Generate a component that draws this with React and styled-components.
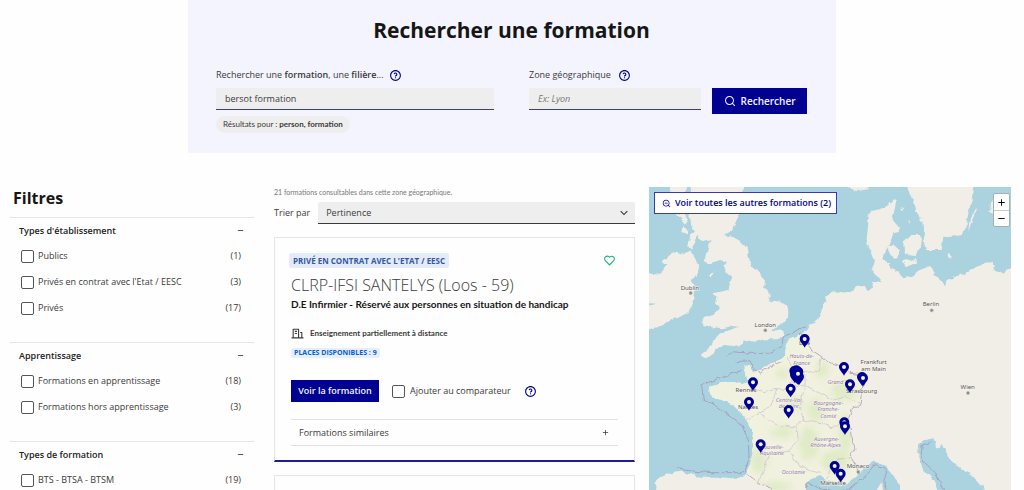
import React from 'react';
import styled, { createGlobalStyle } from 'styled-components';
import {
  RiQuestionLine,
  RiSearchLine,
  RiZoomOutLine,
  RiHeartLine,
  RiBuildingLine,
  RiArrowDownSLine,
  RiAddLine,
  RiSubtractLine
} from 'react-icons/ri';

const GlobalStyle = createGlobalStyle`
  * {
    box-sizing: border-box;
  }
  html {
    scrollbar-width: none;
  }
  body {
    margin: 0;
    background: #fefefe;
    color: #3a3a3a;
    font-family: "Open Sans", "Noto Sans", sans-serif;
    font-size: 9px;
    line-height: 14px;
  }
  button, input, select {
    font: inherit;
    color: inherit;
    margin: 0;
    border-radius: 0;
  }
  h1, h2, h3, p, ul {
    margin: 0;
    padding: 0;
  }
`;

const blue = '#000091';
const compactFont = 'Lato, "Open Sans", sans-serif';

/* ---------- search banner ---------- */

const Banner = styled.header`
  max-width: 648px;
  height: 153px;
  margin: 0 auto;
  padding: 14px 29px 0 28px;
  background: #f4f4fe;
`;

const BannerTitle = styled.h1`
  color: #161616;
  font-size: 21px;
  line-height: 32px;
  text-align: center;
`;

const SearchForm = styled.form`
  display: flex;
  align-items: flex-start;
  margin-top: 20px;
`;

const Field = styled.div`
  flex: ${props => props.$grow} 1 0;
  min-width: 0;
  margin-right: ${props => props.$gap}px;
`;

const FieldLabel = styled.div`
  display: flex;
  align-items: center;
  gap: ${props => props.$gap}px;
  height: 18px;
  margin-bottom: 4px;
  b {
    font-weight: 600;
  }
`;

const HelpButton = styled.button`
  display: flex;
  padding: 0;
  border: 0;
  background: none;
  color: ${blue};
  font-size: 13px;
`;

const TextInput = styled.input`
  display: block;
  width: 100%;
  height: 22px;
  padding: 0 9px;
  border: 0;
  border-bottom: 1px solid #3a3ab0;
  border-radius: 2px 2px 0 0;
  background: #eee;
  outline: none;
  &::placeholder {
    color: #777;
    font-style: italic;
    opacity: 1;
  }
`;

const Chip = styled.p`
  display: inline-block;
  margin-top: 6px;
  padding: 0 7px;
  border-radius: 9px;
  background: #eee;
  font-family: ${compactFont};
  font-size: 8px;
  line-height: 17px;
`;

const PrimaryButton = styled.button`
  display: flex;
  align-items: center;
  justify-content: center;
  gap: 5px;
  width: ${props => props.$width}px;
  height: ${props => props.$height}px;
  padding: 0;
  border: 0;
  background: ${blue};
  color: #f5f5fe;
  font-size: ${props => props.$size}px;
  font-weight: 600;
`;

const SearchButton = styled(PrimaryButton)`
  margin-top: 22px;
`;

/* ---------- page columns ---------- */

const Columns = styled.main`
  display: flex;
  margin-top: 34px;
  padding: 0 13px 0 10px;
`;

const Filters = styled.aside`
  flex: 0 0 244px;
  margin-right: 20px;
`;

const Results = styled.section`
  flex: 361 1 0;
  min-width: 0;
  margin-right: 14px;
`;

/* ---------- filters ---------- */

const FiltersTitle = styled.h2`
  padding-left: 3px;
  color: #161616;
  font-size: 16px;
  line-height: 22px;
  margin-bottom: 8px;
`;

const FilterGroup = styled.section`
  padding: 0 13px 21px 9px;
  border-top: 1px solid #e5e5e5;
`;

const FilterHeader = styled.h3`
  display: flex;
  align-items: center;
  justify-content: space-between;
  height: 25px;
  margin-right: -4px;
  color: #222;
  font-size: 9px;
  font-weight: 600;
`;

const Toggle = styled.button`
  display: flex;
  padding: 0;
  border: 0;
  background: none;
  font-size: 9px;
`;

const FilterRow = styled.li`
  display: flex;
  align-items: center;
  justify-content: space-between;
  height: 26px;
  padding-left: 2px;
`;

const CheckLabel = styled.label`
  display: flex;
  align-items: center;
  gap: ${props => props.$gap || 4}px;
`;

const Checkbox = styled.input.attrs({ type: 'checkbox' })`
  appearance: none;
  width: 13px;
  height: 13px;
  border: 1px solid #555;
  border-radius: 2px;
  background: #fff;
  &:checked {
    background: ${blue};
  }
`;

/* ---------- results ---------- */

const Count = styled.p`
  color: #777;
  font-family: ${compactFont};
  font-size: 7px;
  line-height: 10px;
`;

const SortRow = styled.div`
  display: flex;
  align-items: center;
  gap: 8px;
  margin: 5px 0 13px;
`;

const SelectBox = styled.div`
  position: relative;
  flex: 1;
`;

const Select = styled.select`
  display: block;
  appearance: none;
  width: 100%;
  height: 22px;
  padding: 0 8px;
  border: 0;
  border-bottom: 1px solid #3a3a3a;
  border-radius: 2px 2px 0 0;
  background: #eee;
`;

const SelectArrow = styled(RiArrowDownSLine)`
  position: absolute;
  top: 4px;
  right: 4px;
  font-size: 14px;
  pointer-events: none;
`;

const Card = styled.article`
  min-height: 225px;
  margin-bottom: 13px;
  padding: 13px 16px 0;
  border: 1px solid #e5e5e5;
  border-bottom: 2px solid #1d1d9c;
`;

const CardTop = styled.div`
  display: flex;
  align-items: center;
  justify-content: space-between;
  height: 18px;
  margin-left: -2px;
`;

const Badge = styled.span`
  display: inline-block;
  padding: 0 ${props => (props.$small ? 3 : 4)}px;
  border-radius: 2px;
  background: ${props => (props.$small ? '#e8edff' : '#e3ebfd')};
  color: ${props => (props.$small ? '#0063cb' : '#3558a2')};
  font-size: ${props => (props.$small ? 7 : 8)}px;
  font-weight: 700;
  line-height: ${props => (props.$small ? 10 : 15)}px;
  text-transform: uppercase;
`;

const LikeButton = styled(HelpButton)`
  margin-right: 2px;
  color: #1fb57a;
`;

const School = styled.p`
  margin-top: 5px;
  font-size: 16px;
  font-weight: 300;
  line-height: 22px;
`;

const Course = styled.h3`
  color: #161616;
  font-family: ${compactFont};
  font-size: 10px;
  line-height: 16px;
`;

const Mode = styled.p`
  display: flex;
  align-items: center;
  gap: 6px;
  margin-top: 14px;
  font-family: ${compactFont};
  font-size: 8px;
  font-weight: 700;
  line-height: 14px;
  svg {
    font-size: 13px;
  }
`;

const Places = styled.div`
  display: flex;
  margin-top: 8px;
`;

const Actions = styled.div`
  display: flex;
  align-items: center;
  gap: 13px;
  margin-top: 22px;
`;

const Similar = styled.button`
  display: flex;
  align-items: center;
  justify-content: space-between;
  width: 100%;
  height: 27px;
  margin-top: 17px;
  padding: 0 8px;
  border: 0;
  border-top: 1px solid #e0e0e0;
  border-bottom: 1px solid #e0e0e0;
  background: none;
`;

/* ---------- map ---------- */

const MapPanel = styled.section`
  position: relative;
  flex: 362 1 0;
  min-width: 0;
  height: calc(100vh - 187px);
  min-height: 303px;
  overflow: hidden;
  background: #aad3df;
`;

const MapDrawing = styled.svg`
  display: block;
  width: 100%;
  height: 100%;
`;

const SeeAll = styled.button`
  position: absolute;
  top: 5px;
  left: 5px;
  display: flex;
  align-items: center;
  gap: 4px;
  height: 22px;
  padding: 0 5px 0 7px;
  border: 1px solid #3a3ab0;
  background: #fff;
  color: ${blue};
  font-weight: 600;
`;

const ZoomControl = styled.div`
  position: absolute;
  top: 6px;
  right: 1px;
  border: 1px solid #9fb0b8;
  border-radius: 2px;
  background: #fff;
`;

const ZoomButton = styled.button`
  display: flex;
  align-items: center;
  justify-content: center;
  width: 15px;
  height: 16px;
  padding: 0;
  border: 0;
  background: none;
  color: #000;
  font-size: 11px;
  & + & {
    border-top: 1px solid #ccc;
  }
`;

const Town = styled.text`
  fill: #555;
  stroke: #f5f3ee;
  stroke-width: 3px;
  paint-order: stroke;
  font-family: "Noto Sans", sans-serif;
  font-size: 18px;
  text-anchor: middle;
`;

const Region = styled(Town)`
  fill: #9a83a5;
  font-size: 17px;
  font-style: italic;
`;

const filterGroups = [
  {
    title: "Types d'établissement",
    items: [['Publics', 1], ["Privés en contrat avec l'Etat / EESC", 3], ['Privés', 17]]
  },
  {
    title: 'Apprentissage',
    items: [['Formations en apprentissage', 18], ['Formations hors apprentissage', 3]]
  },
  {
    title: 'Types de formation',
    items: [['BTS - BTSA - BTSM', 19]]
  }
];

// name, x, baseline
const towns = [
  ['Dublin', 123, 308],
  ['London', 349, 419],
  ['Berlin', 846, 358],
  ['Frankfurt', 674, 530],
  ['am Main', 674, 551],
  ['Strasbourg', 638, 617],
  ['Wien', 956, 607],
  ['Monaco', 627, 844],
  ['Marseille', 552, 895],
  ['Rennes', 291, 616],
  ['Nantes', 297, 665],
  ['Lille', 467, 474]
];

const regions = [
  ['Hauts-de-', 458, 514],
  ['France', 458, 533],
  ['Grand Est', 572, 591],
  ['Centre-Val', 419, 644],
  ['de Loire', 419, 663],
  ['Bourgogne-', 538, 653],
  ['Franche-', 538, 673],
  ['Comté', 538, 692],
  ['Auvergne-', 533, 762],
  ['Rhône-Alpes', 530, 780],
  ['Nouvelle-', 368, 785],
  ['Aquitaine', 369, 804],
  ['Occitanie', 433, 862]
];

const townDots = [[125, 318], [349, 430], [848, 370], [957, 618], [628, 855]];

const pins = [
  [467, 456], [312, 586], [300, 645], [436, 552], [448, 554], [442, 550],
  [438, 563], [450, 569], [445, 567], [440, 558], [447, 560], [425, 605], [419, 669], [335, 772],
  [585, 540], [603, 592], [639, 570], [642, 573], [586, 706], [588, 718],
  [557, 837], [575, 860]
];

const coastWest = '443 449 418 459 410 484 408 509 383 524 348 539 338 551 313 554 306 539 286 534 291 559 296 584 278 591 253 589 228 584 203 594 180 599 183 619 193 634 218 639 243 649 263 664 278 679 288 699 303 719 313 729 310 754 316 774 306 819 293 859';

const Pin = ({ x, y }) => (
  <g transform={`translate(${x} ${y})`}>
    <path d="M0 26C-4 17-15 9-15 0A15 15 0 0 1 15 0C15 9 4 17 0 26Z" fill={blue} />
    <circle r="6" fill="#f5f5fa" />
  </g>
);

const EuropeMap = () => (
  <MapDrawing viewBox="0 0 1086 909" preserveAspectRatio="xMinYMin slice" role="img" aria-label="Carte des formations">
    <defs>
      <filter id="rough" x="0" y="0" width="100%" height="100%" filterUnits="userSpaceOnUse" colorInterpolationFilters="sRGB">
        <feTurbulence type="fractalNoise" baseFrequency="0.05" numOctaves="2" seed="4" />
        <feDisplacementMap in="SourceGraphic" scale="14" xChannelSelector="R" yChannelSelector="G" />
      </filter>
      <filter id="soft">
        <feGaussianBlur stdDeviation="9" />
      </filter>
      <clipPath id="france">
        <path d={`M${coastWest} 328 889 368 904 388 909 468 909 468 894 488 874 513 864 533 879 558 894 588 897 628 864 623 839 603 809 618 784 608 759 603 719 583 714 598 694 613 664 633 654 638 609 648 579 643 564 603 559 578 539 543 530 518 509 488 489 468 459 450 441Z`} />
      </clipPath>
    </defs>
    <g filter="url(#rough)">
      {/* sea goes a little past the frame so the displaced edge stays hidden */}
      <rect x="-30" y="-30" width="1146" height="969" fill="#aad3df" />
      <g fill="#f1eee8">
        <path d="M-20 259 0 259 33 264 53 234 38 222 63 204 83 194 103 201 123 190 138 214 150 241 143 269 128 279 136 309 130 354 118 379 93 389 58 404 28 419 -20 432 -20 362 18 350 -20 346Z" />
        <path d="M123 -20 298 -20 278 17 273 79 263 99 250 129 228 144 253 151 278 164 293 184 303 224 310 241 333 259 348 279 346 299 363 324 360 344 373 341 398 344 416 359 418 379 406 404 388 419 368 429 403 431 406 447 388 457 348 457 318 464 288 459 273 474 253 477 228 474 203 484 193 504 173 514 153 504 148 509 173 489 193 464 210 439 243 429 268 419 248 417 223 424 193 421 163 414 160 394 193 384 213 364 198 349 203 329 188 319 218 314 238 309 243 289 250 274 233 254 223 234 233 224 213 219 183 229 163 224 173 204 178 179 188 159 168 164 153 159 148 144 138 159 128 189 118 179 123 149 138 129 123 119 128 99 118 79 128 39Z" />
        <path d="M63 -20 118 -20 106 22 88 35 66 10ZM78 82 100 78 118 95 108 110 96 96ZM103 120 118 125 114 142 100 136ZM178 269 193 251 193 259 185 274Z" />
        <path d={`M558 314 528 329 533 344 526 354 508 394 483 414 468 434 ${coastWest} 283 869 248 874 203 869 148 869 98 854 63 859 38 869 16 884 23 899 18 940L1120 940 1120 230 1086 244 1063 259 1038 249 1028 224 983 239 948 259 893 279 888 294 873 279 853 264 858 254 843 237 813 249 788 269 763 274 748 254 723 244 723 229 703 219 708 194 723 169 733 139 753 134 748 119 731 99 735 74 743 39 733 34 718 54 693 69 668 74 655 84 658 109 653 159 661 184 678 219 668 249 683 269 698 289 673 284 668 304 655 314 648 297 618 299 613 312 563 317Z`} />
        <path d="M768 -20 783 24 798 54 803 79 823 109 828 139 823 159 831 189 878 189 883 149 938 142 953 119 958 79 968 39 975 -20Z" />
        <path d="M714 178 732 172 750 188 750 204 738 216 724 206ZM763 164 788 144 813 144 821 174 805 189 801 209 783 204 765 196ZM758 222 800 216 805 226 773 239ZM898 197 911 209 903 215 895 207ZM983 59 973 89 958 134 961 104 975 69ZM1023 49 1040 30 1040 89 1021 74ZM598 -20 598 2 623 12 655 4 663 -20ZM753 62 766 62 762 70ZM778 100 784 103 780 108Z" />
      </g>
      <g clipPath="url(#france)">
        <rect x="170" y="430" width="490" height="480" fill="#f1f1df" />
        <g fill="#d8e8be" filter="url(#soft)" opacity="0.7">
          <ellipse cx="330" cy="822" rx="24" ry="36" />
          <ellipse cx="585" cy="610" rx="38" ry="30" />
          <ellipse cx="560" cy="820" rx="42" ry="32" />
          <ellipse cx="480" cy="770" rx="30" ry="50" />
          <ellipse cx="590" cy="740" rx="20" ry="60" />
          <ellipse cx="400" cy="560" rx="20" ry="14" />
          <ellipse cx="430" cy="650" rx="30" ry="20" />
          <ellipse cx="500" cy="670" rx="26" ry="34" />
          <ellipse cx="370" cy="900" rx="60" ry="14" />
          <ellipse cx="520" cy="550" rx="18" ry="26" />
          <ellipse cx="400" cy="735" rx="34" ry="18" />
        </g>
      </g>
      <path fill="#aad3df" d="M468 940 468 894 488 874 513 864 533 879 555 884 558 894 588 897 603 884 628 864 648 839 673 824 698 829 723 854 743 879 768 940ZM808 774 828 759 853 754 858 764 861 784 878 774 903 814 928 839 963 859 1040 940 878 940 853 879 823 849 808 814Z" />
      <path fill="#f1eee8" d="M684 940 688 905 700 886 703 940ZM884 768 900 784 918 806 908 804 892 788Z" />
      <g fill="none" stroke="#a58bb0" strokeWidth="3" opacity="0.7">
        <path d="M450 441 468 459 488 489 518 509 543 530 578 539 603 559 643 564 648 579 638 609 633 654 613 664 598 694 583 714 603 719 608 759 618 784 603 809 623 839 628 864" />
        <path d="M293 862 328 889 368 904 388 920" />
        <path d="M233 509 248 494 308 499 358 499 398 479 403 449 438 434 468 419" />
        <path d="M263 524 303 521 313 544 333 559 363 539 400 524" />
        <path d="M278 550 208 574 158 594 163 639 203 659 248 689 278 714 298 759 300 809 288 857 188 857 118 851 78 844" />
        <path d="M468 915 478 885 510 905 560 912 600 908 650 868 680 832 715 852 705 880 708 915M848 766 820 775 815 815 860 858 885 915" />
      </g>
      <g fill="none" stroke="#bba9c2" strokeWidth="2" opacity="0.7">
        <path d="M413 509 433 549 463 559 508 549 518 509M433 549 428 579 443 599 468 594 468 559" />
        <path d="M303 604 348 614 378 604 403 614 428 584M383 604 368 654 333 679 288 699" />
        <path d="M333 679 358 699 393 719 443 719 463 699 453 659 468 594 513 619 553 639 593 629 638 654" />
        <path d="M443 719 448 759 418 789 358 804 348 839 328 889M463 699 513 709 543 719 583 714" />
        <path d="M418 789 443 829 473 849 513 859M603 809 563 819 543 849 533 874" />
      </g>
    </g>
    {townDots.map(([x, y]) => <circle key={x} cx={x} cy={y} r="5" fill="#8d8a86" stroke="#c9c6c1" strokeWidth="2" />)}
    {regions.map(([name, x, y]) => <Region key={name} x={x} y={y}>{name}</Region>)}
    {towns.map(([name, x, y]) => <Town key={name} x={x} y={y}>{name}</Town>)}
    {pins.map(([x, y]) => <Pin key={`${x}-${y}`} x={x} y={y} />)}
  </MapDrawing>
);

const FilterSection = ({ title, items }) => (
  <FilterGroup>
    <FilterHeader>
      {title}
      <Toggle type="button" aria-label={`Replier ${title}`}><RiSubtractLine /></Toggle>
    </FilterHeader>
    <ul>
      {items.map(([name, total]) => (
        <FilterRow key={name}>
          <CheckLabel><Checkbox />{name}</CheckLabel>
          <span>({total})</span>
        </FilterRow>
      ))}
    </ul>
  </FilterGroup>
);

const App = () => {
  return (
    <>
      <GlobalStyle />
      <Banner>
        <BannerTitle>Rechercher une formation</BannerTitle>
        <SearchForm onSubmit={e => e.preventDefault()}>
          <Field $grow={278} $gap={35}>
            <FieldLabel $gap={5}>
              <label htmlFor="query">Rechercher une <b>formation</b>, une <b>filière</b>...</label>
              <HelpButton type="button" aria-label="Aide sur la recherche"><RiQuestionLine /></HelpButton>
            </FieldLabel>
            <TextInput id="query" defaultValue="bersot formation" />
            <Chip>Résultats pour : <b>person, formation</b></Chip>
          </Field>
          <Field $grow={172} $gap={11}>
            <FieldLabel $gap={7}>
              <label htmlFor="zone">Zone géographique</label>
              <HelpButton type="button" aria-label="Aide sur la zone"><RiQuestionLine /></HelpButton>
            </FieldLabel>
            <TextInput id="zone" placeholder="Ex: Lyon" />
          </Field>
          <SearchButton $width={95} $height={26} $size={10}>
            <RiSearchLine size={12} />
            Rechercher
          </SearchButton>
        </SearchForm>
      </Banner>
      <Columns>
        <Filters>
          <FiltersTitle>Filtres</FiltersTitle>
          {filterGroups.map(group => <FilterSection key={group.title} {...group} />)}
        </Filters>
        <Results>
          <Count>21 formations consultables dans cette zone géographique.</Count>
          <SortRow>
            <label htmlFor="sort">Trier par</label>
            <SelectBox>
              <Select id="sort">
                <option>Pertinence</option>
              </Select>
              <SelectArrow />
            </SelectBox>
          </SortRow>
          <Card>
            <CardTop>
              <Badge>Privé en contrat avec l'Etat / EESC</Badge>
              <LikeButton type="button" aria-label="Ajouter aux favoris"><RiHeartLine /></LikeButton>
            </CardTop>
            <School>CLRP-IFSI SANTELYS (Loos - 59)</School>
            <Course>D.E Infirmier - Réservé aux personnes en situation de handicap</Course>
            <Mode><RiBuildingLine />Enseignement partiellement à distance</Mode>
            <Places><Badge $small>Places disponibles : 9</Badge></Places>
            <Actions>
              <PrimaryButton type="button" $width={88} $height={22} $size={9}>Voir la formation</PrimaryButton>
              <CheckLabel $gap={5}><Checkbox />Ajouter au comparateur</CheckLabel>
              <HelpButton type="button" aria-label="Aide sur le comparateur"><RiQuestionLine /></HelpButton>
            </Actions>
            <Similar type="button">Formations similaires<RiAddLine size={9} /></Similar>
          </Card>
          <Card />
        </Results>
        <MapPanel>
          <EuropeMap />
          <SeeAll type="button"><RiZoomOutLine />Voir toutes les autres formations (2)</SeeAll>
          <ZoomControl>
            <ZoomButton type="button" aria-label="Zoom avant"><RiAddLine /></ZoomButton>
            <ZoomButton type="button" aria-label="Zoom arrière"><RiSubtractLine /></ZoomButton>
          </ZoomControl>
        </MapPanel>
      </Columns>
    </>
  );
};

export default App;
